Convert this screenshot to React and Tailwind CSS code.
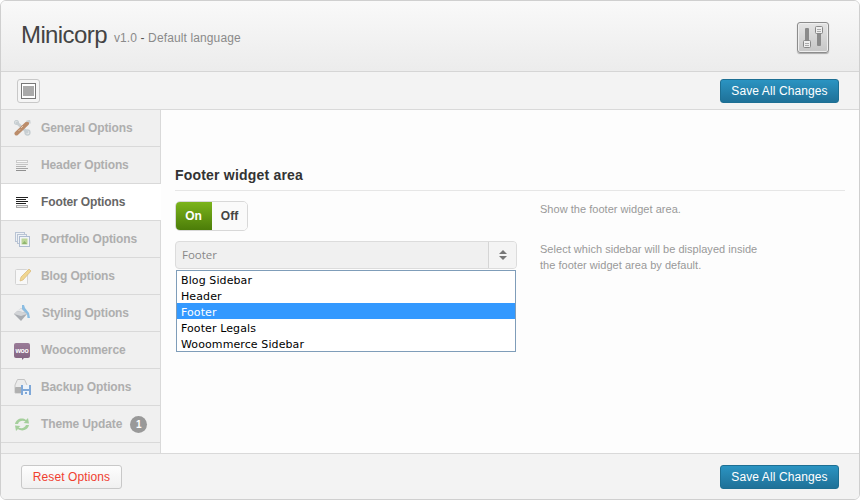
import React from 'react';

const font = 'font-["Liberation_Sans",Arial,sans-serif]';

const ToolsIcon = () => (
  <svg width="17" height="16" viewBox="0 0 17 16">
    <path d="M2 2 L14 13" stroke="#c9cfd2" strokeWidth="3" />
    <circle cx="13.5" cy="12.5" r="2.4" fill="none" stroke="#c6ced2" strokeWidth="1.5" />
    <circle cx="2.5" cy="2.5" r="2" fill="none" stroke="#c6ced2" strokeWidth="1.2" />
    <path d="M13 3.5 L2.5 13.5" stroke="#bb8c6a" strokeWidth="4" strokeLinecap="round" />
    <path d="M9 6 L7 8 M6 9.5 L4.5 11" stroke="#e2c8b0" strokeWidth="1" />
    <path d="M12.5 1.5 L15.5 .5 L16 3.5" fill="none" stroke="#c9cfd2" strokeWidth="1.5" />
  </svg>
);

const LinesIcon = ({ dark }) =>
  dark ? (
    <svg width="12" height="11" viewBox="0 0 12 11">
      <path d="M0 .5H12M0 2.5H10M0 4.5H12M0 6.5H10" stroke="#222" />
      <rect x=".5" y="8.5" width="11" height="2" fill="#eee" stroke="#aaa" />
    </svg>
  ) : (
    <svg width="12" height="11" viewBox="0 0 12 11">
      <rect x=".5" y=".5" width="11" height="2" fill="#f8f8f8" stroke="#ccc" />
      <path d="M0 4.5H12" stroke="#c4c4c4" />
      <path d="M0 6.5H10" stroke="#b4b4b4" />
      <path d="M0 8.5H12" stroke="#a4a4a4" />
      <path d="M0 10.5H10" stroke="#909090" />
    </svg>
  );

const PortfolioIcon = () => (
  <svg width="15" height="15" viewBox="0 0 15 15">
    <rect x=".5" y=".5" width="9" height="9" fill="#eef1f5" stroke="#b9c4d4" />
    <rect x="2.5" y="2.5" width="9" height="9" fill="#eef1f5" stroke="#b9c4d4" />
    <rect x="4.5" y="4.5" width="10" height="10" fill="#f2f4f7" stroke="#aebcd0" />
    <rect x="6.5" y="6.5" width="6" height="6" fill="#bcd69a" />
    <path d="M7 12 L9.5 9 L12 12Z" fill="#8fb56e" />
  </svg>
);

const BlogIcon = () => (
  <svg width="16" height="17" viewBox="0 0 16 17">
    <rect x=".5" y="1.5" width="12" height="15" rx="1" fill="#f8f8f8" stroke="#d4d4d4" />
    <path d="M14 1 L16 3 L8 12 L5 13 L6 9Z" fill="#f0d690" stroke="#d8b878" strokeWidth=".7" />
  </svg>
);

const PaintIcon = () => (
  <svg width="17" height="18" viewBox="0 0 17 18">
    <path d="M7 4 L13 10 L7 17 L0 10Z" fill="#a8abb0" />
    <path d="M7 4 L11 8.5 L3 7Z" fill="#e8e9eb" />
    <path d="M0 10 L3 7 L11 8.5 L13 10 L7 12Z" fill="#d2d4d7" />
    <path d="M8 5 L8 1 L10 1 L11 4 L15 9 L16 14 L13.5 14 L13 10Z" fill="#8bbde2" />
  </svg>
);

const WooIcon = () => (
  <div className="relative flex h-[15px] w-4 items-center justify-center rounded-[2px] bg-gradient-to-b from-[#9a7c98] to-[#856683]">
    <span className="text-[7px] leading-none font-bold tracking-[-0.3px] text-white">woo</span>
    <div className="absolute -bottom-[2px] left-[8px] h-0 w-0 border-t-[3px] border-r-[3px] border-t-[#856683] border-r-transparent" />
  </div>
);

const BackupIcon = () => (
  <svg width="17" height="16" viewBox="0 0 17 16">
    <path d="M3.5 .5 H10.5 L13 6 V14 H1 V6Z" fill="#ececec" stroke="#c4c4c4" />
    <rect x="1" y="8" width="12" height="6" rx="1" fill="#b0b0b0" />
    <rect x="7" y="6" width="10" height="10" fill="#7fa8d8" />
    <rect x="9" y="6" width="6" height="4" fill="#eef3f9" />
    <rect x="9" y="12" width="6" height="4" fill="#eef3f9" />
    <rect x="11" y="13" width="2" height="2" fill="#7fa8d8" />
  </svg>
);

const UpdateIcon = () => (
  <svg width="16" height="15" viewBox="0 0 16 15">
    <path d="M1 7 C2 2 8 0 12 3 L14 1 L15 6.5 L9.5 6 L11.5 4.5 C8.5 3 5 4 4 7Z" fill="#a5cf9c" />
    <path d="M15 8 C14 13 8 15 4 12 L2 14 L1 8.5 L6.5 9 L4.5 10.5 C7.5 12 11 11 12 8Z" fill="#a5cf9c" />
  </svg>
);

const navItems = [
  { label: 'General Options', icon: <ToolsIcon />, x: 'pl-[13px]' },
  { label: 'Header Options', icon: <LinesIcon />, x: 'pl-[15px]' },
  { label: 'Footer Options', icon: <LinesIcon dark />, active: true, x: 'pl-[15px]' },
  { label: 'Portfolio Options', icon: <PortfolioIcon />, x: 'pl-[14px]' },
  { label: 'Blog Options', icon: <BlogIcon />, x: 'pl-[14px]' },
  { label: 'Styling Options', icon: <PaintIcon />, x: 'pl-[13px]', wide: true },
  { label: 'Woocommerce', icon: <WooIcon />, x: 'pl-[13px]' },
  { label: 'Backup Options', icon: <BackupIcon />, x: 'pl-[13px]' },
  { label: 'Theme Update', icon: <UpdateIcon />, badge: 1, x: 'pl-[13px]' },
];

const SaveButton = () => (
  <button className="h-6 w-[119px] rounded-[3px] border border-[#1d6f93] bg-gradient-to-b from-[#2b94c2] to-[#1f7198] text-center text-[12px] leading-[22px] tracking-[0.1px] text-white">
    Save All Changes
  </button>
);

const NavRow = ({ item }) => (
  <div
    className={`flex h-[37px] w-[160px] items-center border-b border-[#d9d9d9] ${
      item.active ? 'bg-white text-[#666]' : 'border-r bg-[#f0f0f0] text-[#aeaeae]'
    }`}
  >
    <div className={`flex shrink-0 ${item.wide ? 'w-[41px]' : 'w-[40px]'} ${item.x}`}>{item.icon}</div>
    <span className="text-[12px] font-bold tracking-[-0.12px]">{item.label}</span>
    {item.badge && (
      <span className="ml-[8px] flex h-[17px] w-[17px] items-center justify-center rounded-full bg-[#999] text-[10px] font-bold text-white">
        {item.badge}
      </span>
    )}
  </div>
);

export default function App() {
  const options = ['Blog Sidebar', 'Header', 'Footer', 'Footer Legals', 'Wooommerce Sidebar'];

  return (
    <div className={`${font} h-[500px] w-[860px] overflow-hidden`}>
      <div className="flex h-[500px] flex-col overflow-hidden rounded-[6px] border border-[#cfcfcf] bg-[#fdfdfd]">
        {/* header */}
        <div className="flex h-[71px] shrink-0 items-center justify-between border-b border-[#d5d5d5] bg-gradient-to-b from-[#f9f9f9] to-[#ececec] pr-[30px] pl-[20px]">
          <div className="-mt-[2px] flex items-baseline">
            <span className="text-[24px] leading-none tracking-[-0.6px] text-[#444]">Minicorp</span>
            <span className="ml-[7px] -translate-y-px text-[12px] tracking-[0.12px] text-[#8a8a8a]">
              v1.0 <span className="text-[#555]">-</span> Default language
            </span>
          </div>
          <div className="mt-[3px] h-[31px] w-[32px] rounded-[3px] border border-[#8c8c8c] bg-gradient-to-b from-[#e4e4e4] to-[#c6c6c6] shadow-[0_1px_1px_#aaa,inset_0_0_0_1px_#eee]">
            <svg width="30" height="29" viewBox="0 0 30 29">
              <rect x="7" y="5" width="4" height="13" rx="1" fill="#8a8a8a" />
              <rect x="5.5" y="17.5" width="7" height="7" rx="1" fill="#eee" stroke="#888" />
              <path d="M7 20.5H11M7 22.5H11" stroke="#aaa" />
              <rect x="19" y="9" width="4" height="14" rx="1" fill="#8a8a8a" />
              <rect x="17.5" y="3.5" width="7" height="7" rx="1" fill="#eee" stroke="#888" />
              <path d="M19 6.5H23M19 8.5H23" stroke="#aaa" />
            </svg>
          </div>
        </div>

        {/* toolbar */}
        <div className="flex h-[38px] shrink-0 items-center justify-between border-b border-[#d9d9d9] bg-[#f3f3f3] pr-[20px] pl-[16px]">
          <div className="flex h-[24px] w-[23px] items-center justify-center rounded-[3px] border border-[#c8c8c8] bg-[#f5f5f5]">
            <div className="flex h-[16px] w-[15px] items-center justify-center border border-[#777] bg-white">
              <div className="h-[10px] w-[11px] bg-[#aaa]" />
            </div>
          </div>
          <SaveButton />
        </div>

        {/* body */}
        <div className="flex min-h-0 flex-1">
          <nav className="w-[160px] shrink-0">
            {navItems.map((item) => (
              <NavRow key={item.label} item={item} />
            ))}
            <div className="h-[10px] w-[160px] border-r border-[#d9d9d9] bg-[#f0f0f0]" />
          </nav>

          <main className="flex-1 pt-[55px] pr-[14px] pl-[14px]">
            <h3 className="border-b border-[#e6e6e6] pb-[5px] text-[14px] leading-[20px] font-bold tracking-[0.2px] text-[#333]">
              Footer widget area
            </h3>
            <div className="mt-[10px] flex">
              <div className="w-[342px]">
                <div className="flex h-[30px] w-[73px] overflow-hidden rounded-[5px] border border-[#d8d8d8] text-[12px] font-bold">
                  <div className="-my-px -ml-px flex w-[37px] items-center justify-center bg-gradient-to-b from-[#7db61c] to-[#4a7b08] text-white">
                    On
                  </div>
                  <div className="flex flex-1 items-center justify-center bg-[#fafafa] text-[#444]">Off</div>
                </div>

                <div className="mt-[10px] flex h-[28px] w-[342px] items-center justify-between overflow-hidden rounded-[4px] border border-[#dcdcdc] bg-[#f0f0f0] pl-[6px] font-['Open_Sans',sans-serif] text-[11.5px] text-[#888]">
                  <span>Footer</span>
                  <div className="flex h-full w-[28px] flex-col items-center justify-center border-l border-[#d5d5d5] bg-[#f4f4f4]">
                    <svg width="8" height="10" viewBox="0 0 8 10" className="ml-[1px]">
                      <path d="M4 0 L8 4 H0Z M0 6 H8 L4 10Z" fill="#777" />
                    </svg>
                  </div>
                </div>

                <ul className="mt-[1px] ml-[1px] w-[340px] border border-[#7f9db9] bg-white font-['DejaVu_Sans',sans-serif] text-[11px] tracking-[0.1px] text-black">
                  {options.map((o) => (
                    <li
                      key={o}
                      className={`h-[16px] pl-[4px] leading-[20px] ${o === 'Footer' ? 'bg-[#3399ff] text-white' : ''}`}
                    >
                      {o}
                    </li>
                  ))}
                </ul>
              </div>

              <div className="ml-[23px] text-[11px] tracking-[0.03px] text-[#999]">
                <p className="leading-[16px]">Show the footer widget area.</p>
                <p className="mt-[24px] leading-[16px]">
                  Select which sidebar will be displayed inside
                  <br />
                  the footer widget area by default.
                </p>
              </div>
            </div>
          </main>
        </div>

        {/* footer */}
        <div className="flex h-[46px] shrink-0 items-center justify-between border-t border-[#d9d9d9] bg-[#f3f3f3] pr-[20px] pl-[20px]">
          <button className="h-6 w-[101px] rounded-[3px] border border-[#c8c8c8] bg-gradient-to-b from-[#fdfdfd] to-[#f0f0f0] text-[12px] tracking-[0.1px] text-[#f0402f]">
            Reset Options
          </button>
          <SaveButton />
        </div>
      </div>
    </div>
  );
}
